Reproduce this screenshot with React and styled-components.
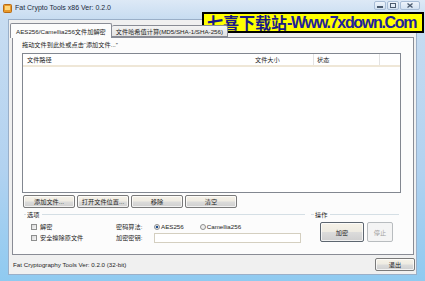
import styled, { createGlobalStyle } from "styled-components";

const GlobalStyle = createGlobalStyle`
  html, body { margin: 0; padding: 0; }
  body {
    width: 425px;
    height: 281px;
    overflow: hidden;
    background: #fff;
    font-family: "Liberation Sans", "Noto Sans CJK SC", sans-serif;
    font-size: 6.2px;
    color: #1e1e1e;
  }
  * { box-sizing: border-box; }
`;

// Outer window frame (Win7 basic look)
const Window = styled.div`
  position: relative;
  width: 425px;
  height: 281px;
  display: flex;
  flex-direction: column;
  background: linear-gradient(180deg, #dde9f6 0px, #c7dcf1 19px, #b2d2f0 60%, #8fcaf0 100%);
`;

const TitleBar = styled.div`
  height: 19px;
  display: flex;
  align-items: flex-start;
  padding: 0 5px 0 3px;
`;

const TitleText = styled.span`
  margin: 3px 0 0 3px;
  font-size: 7px;
  line-height: 9px;
  color: #1b2a3c;
`;

const Controls = styled.div`
  margin-left: auto;
  display: flex;
  gap: 1px;
  margin-top: 1px;
`;

const CtrlButton = styled.div`
  width: ${(p) => p.$w}px;
  height: 9px;
  display: flex;
  align-items: center;
  justify-content: center;
  border: 1px solid #a8bdd6;
  border-radius: 2px;
  background: linear-gradient(180deg, #eef4fb, #d3e2f2);
`;

const Frame = styled.div`
  flex: 1;
  display: flex;
  padding: 0 8px 6px 8px;
`;

const Client = styled.div`
  flex: 1;
  display: flex;
  flex-direction: column;
  background: #f0f0f0;
  border: 1px solid #9aafc8;
  padding-top: 3px;
`;

const TabStrip = styled.div`
  display: flex;
  align-items: flex-end;
  height: 14px;
  padding-left: 1px;
  position: relative;
  z-index: 1;
`;

const Tab = styled.div`
  height: ${(p) => (p.$active ? 15 : 12)}px;
  margin-bottom: ${(p) => (p.$active ? -1 : 0)}px;
  padding: 0 ${(p) => (p.$active ? 5 : 4)}px;
  display: flex;
  align-items: center;
  white-space: nowrap;
  border: 1px solid #898c95;
  border-bottom: ${(p) => (p.$active ? "none" : "1px solid #898c95")};
  border-left: ${(p) => (p.$first ? "1px solid #898c95" : "none")};
  background: ${(p) =>
    p.$active ? "#fcfcfc" : "linear-gradient(180deg, #f3f3f3, #e3e3e3)"};
  border-radius: 2px 2px 0 0;
`;

const Panel = styled.div`
  height: 218px;
  margin: 0 2px 0 3px;
  border: 1px solid #898c95;
  background: #fcfcfc;
  padding: 1px 0 0 9px;
  display: flex;
  flex-direction: column;
`;

const Hint = styled.div`
  height: 11px;
  line-height: 11px;
`;

const List = styled.div`
  width: 379px;
  height: 140px;
  margin-top: 3px;
  border: 1px solid #828790;
  background: #fff;
`;

const ListHeader = styled.div`
  display: grid;
  grid-template-columns: 229px 62px 66px 1fr;
  height: 13px;
  border-bottom: 2px solid #efe7d7;
`;

const HeadCell = styled.div`
  padding-left: ${(p) => p.$pad || 3}px;
  display: flex;
  align-items: center;
  border-right: ${(p) => (p.$sep ? "1px solid #e3e3e3" : "none")};
`;

const ButtonRow = styled.div`
  display: flex;
  gap: 2px;
  margin: 2px 0 0 1px;
`;

const Button = styled.button`
  width: ${(p) => p.$w || 52}px;
  height: ${(p) => p.$h || 13}px;
  padding: 0;
  font: inherit;
  color: ${(p) => (p.disabled ? "#a3a3a3" : "#1e1e1e")};
  border: 1px solid ${(p) => (p.disabled ? "#b8bcbf" : p.$default ? "#5d6670" : "#7a7a7a")};
  border-radius: 2px;
  background: ${(p) =>
    p.disabled
      ? "#f4f4f4"
      : "linear-gradient(180deg, #f6f2e8 0%, #eeebe2 48%, #dcdcdb 52%, #cfcfcf 100%)"};
  box-shadow: ${(p) => (p.disabled ? "none" : "inset 0 0 0 1px rgba(255,255,255,0.7)")};
  display: flex;
  align-items: center;
  justify-content: center;
`;

const GroupsRow = styled.div`
  display: flex;
  margin-top: 2px;
`;

const Group = styled.div`
  width: ${(p) => p.$w}px;
  margin-left: ${(p) => p.$ml}px;
  display: flex;
  flex-direction: column;
`;

const Legend = styled.div`
  height: 8px;
  display: flex;
  align-items: center;
  gap: 1px;
  &::before {
    content: "";
    width: ${(p) => p.$lead}px;
    height: 1px;
    background: #d5dfe5;
  }
  &::after {
    content: "";
    flex: 1;
    height: 1px;
    background: #d5dfe5;
    margin-left: 2px;
  }
`;

const OptionsGrid = styled.div`
  display: grid;
  grid-template-columns: 85px 38px 147px;
  grid-auto-rows: 11px;
  margin: 3px 0 0 7px;
`;

const Cell = styled.div`
  display: flex;
  align-items: center;
  gap: ${(p) => p.$gap || 3}px;
`;

const CheckBox = styled.span`
  width: 6px;
  height: 6px;
  border: 1px solid #8e8f8f;
  background: linear-gradient(135deg, #d8d8d8, #f6f6f6);
`;

const Radio = styled.span`
  width: 6px;
  height: 6px;
  border-radius: 50%;
  border: 1px solid #8e8f8f;
  background: ${(p) =>
    p.$on ? "radial-gradient(circle, #1f4f8f 0 1.3px, #e8e8e8 1.6px)" : "#eeeeee"};
  margin-right: -1px;
`;

const RadioGap = styled.span`
  width: 30px;
  flex: none;
`;

const Input = styled.div`
  width: 147px;
  height: 10px;
  border: 1px solid #d4cfc0;
  background: #fff;
`;

const ActionButtons = styled.div`
  display: flex;
  gap: 3px;
  margin: 4px 0 0 9px;
`;

const Footer = styled.div`
  flex: 1;
  display: flex;
  align-items: center;
  padding: 0 1px 0 4px;
`;

const Status = styled.span`
  margin-top: 0px;
`;

const FooterButton = styled(Button)`
  margin-left: auto;
`;

// Watermark banner lying over the window
const Banner = styled.div`
  position: absolute;
  left: 202px;
  top: 12px;
  width: 222px;
  height: 21px;
  border: 2px solid #000;
  background: #ffff00;
  display: flex;
  align-items: center;
  padding-left: 3px;
  white-space: nowrap;
  font-weight: bold;
  color: #1a1a86;
`;

const BannerCjk = styled.span`
  font-family: "Noto Sans CJK SC", sans-serif;
  font-size: 16px;
  line-height: 17px;
`;

const BannerLatin = styled.span`
  font-family: "Liberation Sans", sans-serif;
  font-size: 16px;
  letter-spacing: -1.3px;
  color: #22229a;
`;

function AppIcon() {
  return (
    <svg width="9" height="9" viewBox="0 0 9 9" style={{ marginTop: 4 }}>
      <rect x="0.5" y="0.5" width="8" height="8" rx="1" fill="#e89a2c" stroke="#b86a14" />
      <rect x="2" y="2" width="5" height="4" fill="#ffd67a" />
    </svg>
  );
}

export default function App() {
  return (
    <>
      <GlobalStyle />
      <Window>
        <TitleBar>
          <AppIcon />
          <TitleText>Fat Crypto Tools x86 Ver: 0.2.0</TitleText>
          <Controls>
            <CtrlButton $w={12}>
              <svg width="6" height="5" viewBox="0 0 6 5">
                <rect x="0" y="3" width="6" height="2" fill="#4a5a6e" />
              </svg>
            </CtrlButton>
            <CtrlButton $w={12}>
              <svg width="6" height="5" viewBox="0 0 6 5">
                <rect x="0.5" y="0.5" width="5" height="4" fill="none" stroke="#4a5a6e" />
              </svg>
            </CtrlButton>
            <CtrlButton $w={20}>
              <svg width="6" height="5" viewBox="0 0 6 5">
                <path d="M0.5 0.5 L5.5 4.5 M5.5 0.5 L0.5 4.5" stroke="#4a5a6e" strokeWidth="1.3" />
              </svg>
            </CtrlButton>
          </Controls>
        </TitleBar>
        <Frame>
          <Client>
            <TabStrip>
              <Tab $active $first>AES256/Camellia256文件加解密</Tab>
              <Tab>文件哈希值计算(MD5/SHA-1/SHA-256)</Tab>
            </TabStrip>
            <Panel>
              <Hint>拖动文件到此处或点击“添加文件...”</Hint>
              <List>
                <ListHeader>
                  <HeadCell $pad={4}>文件路径</HeadCell>
                  <HeadCell $sep>文件大小</HeadCell>
                  <HeadCell $sep>状态</HeadCell>
                  <HeadCell />
                </ListHeader>
              </List>
              <ButtonRow>
                <Button>添加文件...</Button>
                <Button>打开文件位置...</Button>
                <Button>移除</Button>
                <Button>清空</Button>
              </ButtonRow>
              <GroupsRow>
                <Group $w={281} $ml={2}>
                  <Legend $lead={2}>选项</Legend>
                  <OptionsGrid>
                    <Cell>
                      <CheckBox />
                      解密
                    </Cell>
                    <Cell>密码算法:</Cell>
                    <Cell $gap={2}>
                      <Radio $on />
                      AES256
                      <RadioGap style={{ width: 12 }} />
                      <Radio />
                      Camellia256
                    </Cell>
                    <Cell>
                      <CheckBox />
                      安全擦除原文件
                    </Cell>
                    <Cell>加密密钥:</Cell>
                    <Cell>
                      <Input />
                    </Cell>
                  </OptionsGrid>
                </Group>
                <Group $w={88} $ml={6}>
                  <Legend $lead={3}>操作</Legend>
                  <ActionButtons>
                    <Button $w={44} $h={20} $default>
                      加密
                    </Button>
                    <Button $w={26} $h={20} disabled>
                      停止
                    </Button>
                  </ActionButtons>
                </Group>
              </GroupsRow>
            </Panel>
            <Footer>
              <Status>Fat Cryptography Tools Ver: 0.2.0 (32-bit)</Status>
              <FooterButton $w={40}>退出</FooterButton>
            </Footer>
          </Client>
        </Frame>
        <Banner>
          <BannerCjk>七喜下载站</BannerCjk>
          <BannerLatin>-Www.7xdown.Com</BannerLatin>
        </Banner>
      </Window>
    </>
  );
}
